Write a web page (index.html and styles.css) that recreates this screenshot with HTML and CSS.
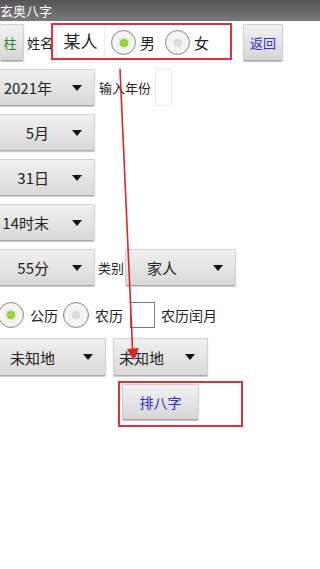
FILE: index.html
```html
<!DOCTYPE html>
<html lang="zh">
<head>
    <meta charset="UTF-8">
    <meta name="viewport" content="width=device-width, initial-scale=1.0">
    <title>玄奥八字</title>
    <link rel="stylesheet" href="styles.css">
</head>
<body>
    <div class="titlebar">玄奥八字</div>
    <div class="page">
        <div class="row row-name">
            <button class="btn btn-zhu">柱</button>
            <span class="label label-name">姓名</span>
            <div class="text-field">某人</div>
            <label class="radio radio-male"><span class="dot on"></span><span class="radio-text">男</span></label>
            <label class="radio radio-female"><span class="dot"></span><span class="radio-text">女</span></label>
            <button class="btn btn-back">返回</button>
        </div>

        <div class="row">
            <div class="spinner spinner-year"><span class="value">2021年</span><span class="caret"></span></div>
            <span class="label label-year">输入年份</span>
            <div class="year-box"></div>
        </div>
        <div class="row">
            <div class="spinner"><span class="value">5月</span><span class="caret"></span></div>
        </div>
        <div class="row">
            <div class="spinner"><span class="value">31日</span><span class="caret"></span></div>
        </div>
        <div class="row">
            <div class="spinner"><span class="value">14时末</span><span class="caret"></span></div>
        </div>
        <div class="row">
            <div class="spinner"><span class="value">55分</span><span class="caret"></span></div>
            <span class="label label-kind">类别</span>
            <div class="spinner spinner-kind"><span class="value">家人</span><span class="caret"></span></div>
        </div>

        <div class="row row-calendar">
            <label class="radio radio-solar"><span class="dot on"></span><span class="radio-text">公历</span></label>
            <label class="radio radio-lunar"><span class="dot"></span><span class="radio-text">农历</span></label>
            <span class="checkbox"></span>
            <span class="check-text">农历闰月</span>
        </div>

        <div class="row row-place">
            <div class="spinner spinner-place"><span class="value">未知地</span><span class="caret"></span></div>
            <div class="spinner spinner-place2"><span class="value">未知地</span><span class="caret"></span></div>
        </div>

        <div class="row row-submit">
            <button class="btn btn-submit">排八字</button>
        </div>
    </div>

    <!-- annotation marks drawn over the screenshot -->
    <div class="mark mark-name"></div>
    <div class="mark mark-submit"></div>
    <svg class="arrow" width="320" height="569" viewBox="0 0 320 569">
        <line x1="120" y1="69" x2="132.6" y2="350" stroke="#e02424" stroke-width="1.6"/>
        <polygon points="127,349 139,348 133.4,360" fill="#e02424"/>
    </svg>
</body>
</html>
```

FILE: styles.css
```css
* {
    margin: 0;
    padding: 0;
    box-sizing: border-box;
}

body {
    font-family: "Noto Sans CJK SC", "Noto Sans", sans-serif;
    background: #ffffff;
    color: #222;
    width: 320px;
    height: 569px;
    position: relative;
    overflow: hidden;
}

.titlebar {
    height: 21px;
    line-height: 21px;
    background: linear-gradient(#555555, #7a7a7a);
    color: #fff;
    font-size: 13px;
    padding-left: 0;
}

.page {
    display: flex;
    flex-direction: column;
    padding-top: 3px;
}

.row {
    display: flex;
    align-items: center;
    height: 37px;
    margin-bottom: 8px;
}

/* buttons */
.btn {
    font-family: inherit;
    background: linear-gradient(#f2f2f2, #d6d6d6);
    border: 1px solid #cfcfcf;
    border-bottom-color: #a9a9a9;
    border-radius: 2px;
    box-shadow: 0 1px 1px rgba(0, 0, 0, 0.25);
    height: 37px;
    font-size: 13px;
}

.btn-zhu {
    width: 24px;
    color: #2a8a2a;
    border-left: none;
    padding-right: 3px;
}

.btn-back {
    width: 40px;
    margin-left: 34px;
    color: #3030c8;
}

.btn-submit {
    width: 77px;
    height: 36px;
    margin-left: 122px;
    color: #2c2cc0;
    font-size: 14px;
}

.label {
    font-size: 13px;
    white-space: nowrap;
}

.label-name {
    margin-left: 3px;
}

.text-field {
    width: 49px;
    height: 36px;
    margin-left: 3px;
    border: 1px solid #eeeeee;
    font-size: 17px;
    line-height: 34px;
    text-align: center;
    align-self: flex-start;
    margin-top: -1px;
}

/* radio buttons */
.radio {
    display: flex;
    align-items: center;
}

.dot {
    width: 25px;
    height: 25px;
    border-radius: 50%;
    border: 1px solid #8a8a8a;
    background: radial-gradient(circle, #f4f4f4 45%, #ffffff 100%);
    display: flex;
    align-items: center;
    justify-content: center;
    box-shadow: inset 0 0 2px rgba(0, 0, 0, 0.15);
}

.dot::after {
    content: "";
    width: 8px;
    height: 8px;
    border-radius: 50%;
    background: radial-gradient(circle, #e2e2e2, #cfcfcf);
}

.dot.on::after {
    background: radial-gradient(circle, #a6e04a, #74c020);
    box-shadow: 0 0 3px #9bd94a;
}

.radio-text {
    font-size: 15px;
    margin-left: 4px;
}

.radio-male {
    margin-left: 6px;
}

.radio-female {
    margin-left: 10px;
}

/* spinners */
.spinner {
    width: 95px;
    height: 37px;
    display: flex;
    align-items: center;
    background: linear-gradient(#f0f0f0, #d9d9d9);
    border: 1px solid #d0d0d0;
    border-bottom-color: #aaaaaa;
    border-left: none;
    border-radius: 0 2px 2px 0;
    box-shadow: 0 1px 1px rgba(0, 0, 0, 0.22);
    font-size: 15px;
}

.spinner .value {
    width: 49px;
    text-align: right;
    white-space: nowrap;
}

.caret {
    width: 0;
    height: 0;
    border-left: 5.5px solid transparent;
    border-right: 5.5px solid transparent;
    border-top: 6px solid #111;
    margin-left: 23px;
}

.spinner-year .value {
    width: 52px;
}

.spinner-year .caret {
    margin-left: 20px;
}

.label-year {
    margin-left: 4px;
}

.year-box {
    width: 17px;
    height: 38px;
    margin-left: 4px;
    border: 1px solid #ececec;
    align-self: flex-start;
    margin-top: -1px;
}

.label-kind {
    margin-left: 3px;
}

.spinner-kind {
    width: 111px;
    margin-left: 1px;
    border-left: 1px solid #d0d0d0;
    border-radius: 2px;
}

.spinner-kind .value {
    width: 51px;
}

.spinner-kind .caret {
    margin-left: 36px;
}

/* calendar row */
.row-calendar {
    height: 28px;
    margin-top: 7px;
    margin-bottom: 9px;
}

.row-calendar .dot {
    width: 26px;
    height: 26px;
}

.radio-solar {
    margin-left: -2px;
}

.radio-solar .radio-text,
.radio-lunar .radio-text {
    font-size: 14px;
    margin-left: 6px;
}

.radio-lunar {
    margin-left: 5px;
}

.checkbox {
    width: 25px;
    height: 26px;
    border: 1px solid #7a7a7a;
    margin-left: 7px;
    background: #fff;
}

.check-text {
    font-size: 14px;
    margin-left: 6px;
}

/* place row */
.row-place {
    height: 38px;
}

.spinner-place {
    width: 106px;
    height: 38px;
}

.spinner-place .value {
    width: 55px;
}

.spinner-place .caret {
    margin-left: 28px;
}

.spinner-place2 {
    width: 95px;
    height: 38px;
    margin-left: 7px;
    border-left: 1px solid #d0d0d0;
    border-radius: 2px;
}

.spinner-place2 .value {
    width: 50px;
}

.spinner-place2 .caret {
    margin-left: 21px;
}

.row-submit {
    height: 36px;
}

/* red annotation marks */
.mark {
    position: absolute;
    border: 2px solid #e0303a;
}

.mark-name {
    left: 51px;
    top: 23px;
    width: 181px;
    height: 37px;
}

.mark-submit {
    left: 118px;
    top: 381px;
    width: 125px;
    height: 46px;
}

.arrow {
    position: absolute;
    left: 0;
    top: 0;
    pointer-events: none;
}
```
